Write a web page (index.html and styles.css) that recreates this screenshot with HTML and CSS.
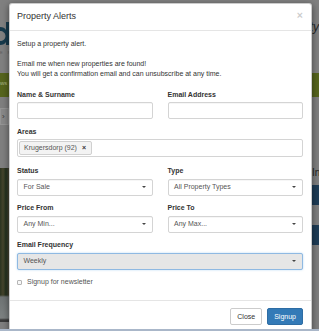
FILE: index.html
```html
<!DOCTYPE html>
<html lang="en">
<head>
<meta charset="utf-8">
<title>Property Alerts</title>
<link rel="stylesheet" href="styles.css">
</head>
<body>
<div class="site">
  <header class="site-header">
    <div class="logo">
      <svg class="logo-mark" width="9" height="24" viewBox="0 0 9 24"><path d="M6 0 H9 V23 H6 V20 C5 22 3 23 0 23 V19 C3 19 5.5 17 5.5 14 C5.5 11 3 9 0 9 V5 C3 5 5 6 6 8 Z" fill="#173a4c"/></svg>
      <span class="logo-sub">E P</span>
    </div>
    <span class="tagline">ty</span>
  </header>
  <nav class="site-nav"><span class="nav-link">ws</span></nav>
  <div class="site-body">
    <aside class="search-col">
      <span class="search-btn">›</span>
      <div class="photo"></div>
    </aside>
    <section class="listing-col">
      <h2 class="listing-title">In</h2>
      <div class="listing-bar"></div>
      <div class="listing-bar second"></div>
    </section>
  </div>
</div>

<div class="modal-layer">
  <div class="modal">
    <div class="modal-header">
      <h4 class="modal-title">Property Alerts</h4>
      <button class="close" type="button">×</button>
    </div>
    <div class="modal-body">
      <p class="intro">Setup a property alert.</p>
      <p class="intro last">Email me when new properties are found!<br>You will get a confirmation email and can unsubscribe at any time.</p>

      <div class="form-row">
        <div class="form-group">
          <label>Name &amp; Surname</label>
          <div class="field"></div>
        </div>
        <div class="form-group">
          <label>Email Address</label>
          <div class="field"></div>
        </div>
      </div>

      <div class="form-group areas-group">
        <label>Areas</label>
        <div class="tags">
          <span class="tag"><span>Krugersdorp (92)</span><span class="tag-x">×</span></span>
        </div>
      </div>

      <div class="form-row">
        <div class="form-group">
          <label>Status</label>
          <div class="field select"><span>For Sale</span><span class="caret"></span></div>
        </div>
        <div class="form-group">
          <label>Type</label>
          <div class="field select"><span>All Property Types</span><span class="caret"></span></div>
        </div>
      </div>

      <div class="form-row">
        <div class="form-group">
          <label>Price From</label>
          <div class="field select"><span>Any Min...</span><span class="caret"></span></div>
        </div>
        <div class="form-group">
          <label>Price To</label>
          <div class="field select"><span>Any Max...</span><span class="caret"></span></div>
        </div>
      </div>

      <div class="form-group">
        <label>Email Frequency</label>
        <div class="field select active"><span>Weekly</span><span class="caret"></span></div>
      </div>

      <div class="check">
        <input type="checkbox" class="check-box">
        <span>Signup for newsletter</span>
      </div>
    </div>
    <div class="modal-footer">
      <button class="btn btn-default" type="button">Close</button>
      <button class="btn btn-primary" type="button">Signup</button>
    </div>
  </div>
</div>
<div class="taskbar"></div>
</body>
</html>
```

FILE: styles.css
```css
* { box-sizing: border-box; }

html, body {
  margin: 0;
  padding: 0;
}

body {
  width: 319px;
  height: 331px;
  overflow: hidden;
  position: relative;
  background: #7f7f7f;
  font-family: "Liberation Sans", Arial, sans-serif;
  font-size: 7px;
  line-height: 10px;
  color: #333;
}

/* ---------- dimmed page behind the modal ---------- */
.site {
  width: 319px;
  height: 331px;
}

.site-header {
  height: 73px;
  display: flex;
  justify-content: space-between;
  align-items: flex-start;
  background: #808080;
}

.logo {
  display: flex;
  flex-direction: column;
  padding-top: 22px;
}

.logo-mark {
  display: block;
}

.logo-sub {
  margin-top: 4px;
  font-size: 4px;
  line-height: 5px;
  letter-spacing: 2px;
  color: #5c5c5c;
}

.tagline {
  margin-top: 20px;
  font-size: 12px;
  line-height: 14px;
  font-style: italic;
  color: #262626;
  white-space: nowrap;
}

.site-nav {
  height: 24px;
  background: #56651d;
  display: flex;
  align-items: flex-start;
  padding-top: 7px;
}

.nav-link {
  font-size: 6px;
  line-height: 7px;
  color: #aab586;
}

.site-body {
  display: flex;
  justify-content: space-between;
}

.search-col {
  width: 9px;
  display: flex;
  flex-direction: column;
}

.search-btn {
  margin-top: 11px;
  height: 17px;
  background: #898989;
  border: 1px solid #959595;
  color: #3a3a3a;
  font-size: 8px;
  line-height: 15px;
  padding-left: 1px;
}

.photo {
  margin-top: 43px;
  height: 154px;
  background:
    linear-gradient(180deg, rgba(0,0,0,0) 0, rgba(0,0,0,0) 127px, #6f7474 129px, #7d8282 150px, #3a3a3a 152px),
    linear-gradient(90deg, #2b3320 0, #46452c 3px, #22301d 6px, #4a4432 9px);
}

.listing-col {
  width: 8px;
  padding-top: 69px;
}

.listing-title {
  margin: 0;
  padding-left: 1px;
  font-size: 10px;
  line-height: 14px;
  font-weight: normal;
  color: #222;
  white-space: nowrap;
}

.listing-bar {
  margin-top: 5px;
  height: 20px;
  background: #1e3c56;
}

.listing-bar.second {
  margin-top: 20px;
}

.taskbar {
  position: absolute;
  left: 0;
  right: 0;
  bottom: 0;
  height: 2px;
  background: #aab7c9;
}

/* ---------- modal ---------- */
.modal-layer {
  position: absolute;
  inset: 0;
  padding: 3px 0 0 8.5px;
}

.modal {
  width: 303px;
  background: #fff;
  border: 1px solid rgba(0, 0, 0, 0.2);
  border-radius: 3px;
  box-shadow: 0 2.5px 7.5px rgba(0, 0, 0, 0.5);
}

.modal-header {
  display: flex;
  justify-content: space-between;
  align-items: center;
  padding: 6px 7.5px 7px;
  border-bottom: 1px solid #e5e5e5;
}

.modal-title {
  margin: 0;
  font-size: 9px;
  line-height: 13px;
  font-weight: normal;
  color: #333;
}

.close {
  padding: 0;
  margin: -3px 0 0;
  border: 0;
  background: none;
  font-family: "Liberation Sans", Arial, sans-serif;
  font-size: 10.5px;
  line-height: 10px;
  font-weight: bold;
  color: #000;
  opacity: 0.2;
}

.modal-body {
  padding: 7.5px;
}

.intro {
  margin: 0 0 10px;
}

.intro.last {
  margin-bottom: 11px;
}

.form-row {
  display: grid;
  grid-template-columns: 1fr 1fr;
  column-gap: 15px;
}

.form-group {
  margin-bottom: 7.5px;
}

.areas-group {
  margin-bottom: 9px;
}

label {
  display: block;
  margin-bottom: 2.5px;
  font-weight: bold;
}

.field {
  height: 17px;
  background: #fff;
  border: 1px solid #d4d4d4;
  border-radius: 2px;
  box-shadow: inset 0 0.5px 0.5px rgba(0, 0, 0, 0.075);
}

.select {
  display: flex;
  justify-content: space-between;
  align-items: center;
  padding: 0 6px 0 5.5px;
  color: #555;
}

.caret {
  width: 0;
  height: 0;
  border-top: 2px solid #444;
  border-left: 2px solid transparent;
  border-right: 2px solid transparent;
}

.select.active {
  background: #e6e6e6;
  border-color: #8fb9e2;
  box-shadow: 0 0 2px rgba(102, 175, 233, 0.5);
}

.tags {
  height: 18px;
  display: flex;
  align-items: center;
  padding: 0 1px;
  border: 1px solid #d4d4d4;
  border-radius: 2px;
}

.tag {
  height: 14px;
  display: flex;
  align-items: center;
  gap: 5px;
  padding: 0 5px 0 4px;
  background: #f3f3f3;
  border: 1px solid #d0d0d0;
  border-radius: 2px;
  color: #555;
}

.tag-x {
  font-weight: bold;
  color: #333;
}

.check {
  display: flex;
  align-items: center;
  gap: 5px;
  margin-bottom: 5px;
  color: #555;
}

.check-box {
  appearance: none;
  margin: 0;
  width: 5px;
  height: 5px;
  border: 1px solid #b5b5b5;
  border-radius: 1px;
  background: #f7f7f7;
}

.modal-footer {
  display: flex;
  justify-content: flex-end;
  gap: 5px;
  padding: 7.5px;
  border-top: 1px solid #e5e5e5;
}

.btn {
  height: 17px;
  padding: 0 6px;
  border: 1px solid;
  border-radius: 2px;
  font-family: "Liberation Sans", Arial, sans-serif;
  font-size: 7px;
  line-height: 15px;
}

.btn-default {
  background: #fff;
  border-color: #ccc;
  color: #333;
}

.btn-primary {
  background: #337ab7;
  border-color: #2e6da4;
  color: #fff;
}
```
